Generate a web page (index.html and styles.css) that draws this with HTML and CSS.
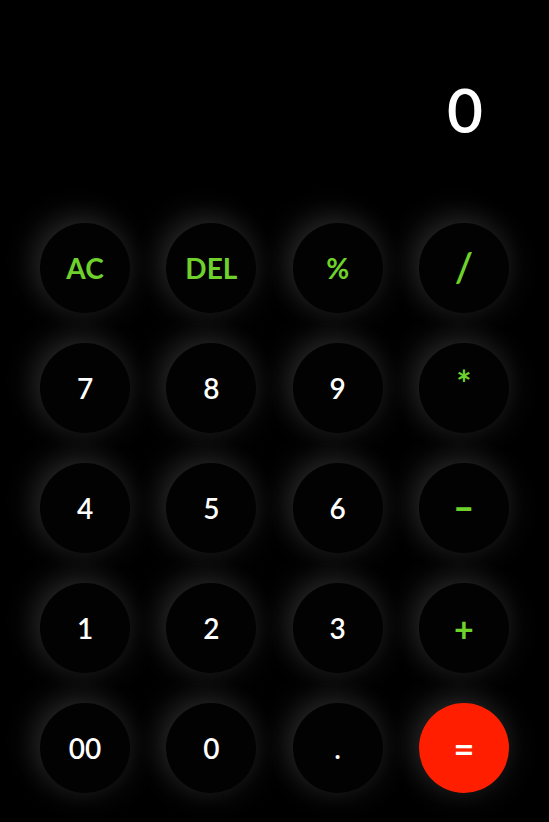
FILE: index.html
```html
<!DOCTYPE html>
<html lang="en">
<head>
<meta charset="utf-8">
<title>Calculator</title>
<link rel="stylesheet" href="styles.css">
</head>
<body>
<main class="calculator">
  <div class="display">0</div>
  <div class="keys">
    <button class="key op">AC</button>
    <button class="key op">DEL</button>
    <button class="key op">%</button>
    <button class="key op slash">/</button>
    <button class="key">7</button>
    <button class="key">8</button>
    <button class="key">9</button>
    <button class="key op star">*</button>
    <button class="key">4</button>
    <button class="key">5</button>
    <button class="key">6</button>
    <button class="key op minus"><span class="glyph">-</span></button>
    <button class="key">1</button>
    <button class="key">2</button>
    <button class="key">3</button>
    <button class="key op plus">+</button>
    <button class="key">00</button>
    <button class="key">0</button>
    <button class="key">.</button>
    <button class="key equal">=</button>
  </div>
</main>
</body>
</html>
```
FILE: styles.css
```css
* { box-sizing: border-box; }
html, body {
  margin: 0;
  padding: 0;
  background: #000;
  height: 100%;
}
body {
  font-family: "Lato", "Open Sans", sans-serif;
  color: #fff;
  overflow: hidden;
}
.calculator {
  width: 549px;
  height: 822px;
  padding: 0 40px;
  display: flex;
  flex-direction: column;
}
.display {
  margin-top: 74px;
  height: 70px;
  line-height: 70px;
  font-size: 62px;
  font-weight: 600;
  text-align: right;
  padding-right: 26px;
  margin-bottom: 79px;
}
.keys {
  display: grid;
  grid-template-columns: repeat(4, 90px);
  justify-content: space-between;
  row-gap: 30px;
}
.key {
  width: 90px;
  height: 90px;
  border-radius: 50%;
  border: none;
  background: #020202;
  color: #fff;
  font-family: inherit;
  font-size: 28px;
  font-weight: 600;
  display: flex;
  align-items: center;
  justify-content: center;
  padding: 0;
  box-shadow: -8px -8px 32px rgba(255, 255, 255, 0.1), 0 0 34px rgba(255, 255, 255, 0.1);
}
.key.op { color: #6ed12c; font-weight: 700; }
.key.slash { font-size: 40px; font-weight: 600; padding-bottom: 2px; }
.key.star { font-size: 36px; padding-bottom: 10px; }
.key.minus { font-size: 36px; padding-bottom: 4px; }
.key.minus .glyph { display: inline-block; transform: scaleX(1.6); }
.key.plus { font-size: 34px; }
.key.equal { background: #ff1f00; color: #fff; font-size: 36px; font-weight: 700; }
```
